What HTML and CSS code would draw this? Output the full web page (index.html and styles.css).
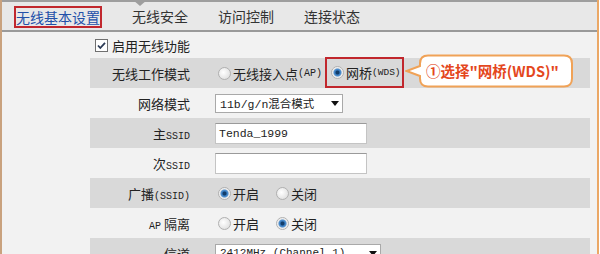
FILE: index.html
```html
<!doctype html>
<html>

<head>
  <meta charset="utf-8">
  <title>无线基本设置</title>
  <link rel="stylesheet" href="styles.css">
</head>

<body>
  <div class="frame">
    <div class="tabs">
      <span class="tab tab-active">无线基本设置</span>
      <span class="tab">无线安全</span>
      <span class="tab">访问控制</span>
      <span class="tab">连接状态</span>
    </div>

    <div class="content">
      <div class="row row-check">
        <svg class="check" width="13" height="13" viewBox="0 0 13 13">
          <rect x="0.5" y="0.5" width="12" height="12" fill="#fff" stroke="#707070" />
          <path d="M3 6.5 L5.3 9 L10 3.8" fill="none" stroke="#2b3a55" stroke-width="1.8" />
        </svg>
        <span>启用无线功能</span>
      </div>

      <div class="row row-gray">
        <div class="label">无线工作模式</div>
        <div class="value opts-mode">
          <span class="opt"><span class="radio"></span>无线接入点<span class="en">(AP)</span></span>
          <span class="opt pick"><span class="radio on"></span>网桥<span class="en">(WDS)</span></span>
        </div>
      </div>

      <div class="row">
        <div class="label">网络模式</div>
        <div class="value">
          <div class="select">
            <span>11b/g/n混合模式</span>
            <svg width="8" height="5" viewBox="0 0 8 5"><polygon points="0 0 8 0 4 5" fill="#111" /></svg>
          </div>
        </div>
      </div>

      <div class="row row-gray">
        <div class="label">主<span class="en">SSID</span></div>
        <div class="value"><div class="input">Tenda_1999</div></div>
      </div>

      <div class="row">
        <div class="label">次<span class="en">SSID</span></div>
        <div class="value"><div class="input"></div></div>
      </div>

      <div class="row row-gray">
        <div class="label">广播<span class="en">(SSID)</span></div>
        <div class="value opts">
          <span class="opt"><span class="radio on"></span>开启</span>
          <span class="opt"><span class="radio"></span>关闭</span>
        </div>
      </div>

      <div class="row">
        <div class="label"><span class="en">AP</span> 隔离</div>
        <div class="value opts">
          <span class="opt"><span class="radio"></span>开启</span>
          <span class="opt"><span class="radio on"></span>关闭</span>
        </div>
      </div>

      <div class="row row-gray">
        <div class="label">信道</div>
        <div class="value">
          <div class="select select-wide">
            <span>2412MHz (Channel 1)</span>
            <svg width="8" height="5" viewBox="0 0 8 5"><polygon points="0 0 8 0 4 5" fill="#111" /></svg>
          </div>
        </div>
      </div>
    </div>

    <div class="callout">
      <svg class="callout__bubble" width="170" height="34" viewBox="0 0 170 34">
        <path d="M23 1.5 H159 Q167 1.5 167 9.5 V24.5 Q167 32.5 159 32.5 H23 Q15 32.5 15 24.5 V22 L1.5 17 L15 12 V9.5 Q15 1.5 23 1.5 Z"
          fill="#fff" stroke="#f0a257" stroke-width="2" />
      </svg>
      <span class="callout__text">①选择"网桥(WDS)"</span>
    </div>
  </div>
</body>

</html>
```

FILE: styles.css
```css
* {
  box-sizing: border-box;
}

body {
  margin: 0;
  background: #fff;
  font-family: "Noto Sans CJK SC", sans-serif;
}

.frame {
  position: relative;
  width: 599px;
  height: 254px;
  overflow: hidden;
  background: #f2f2f2;
  border-left: 2px solid #c9a27e;
  border-right: 2px solid #eba866;
}

/* tab bar */
.tabs {
  position: relative;
  display: flex;
  align-items: center;
  gap: 30px;
  height: 32px;
  padding-left: 12px;
  background: #e8e8e8;
  border-top: 2px solid #9e9e9e;
  border-bottom: 2px solid #9a9a9a;
  font-size: 14px;
  color: #333;
}

.tabs:before {
  content: "";
  position: absolute;
  left: 131px;
  top: -2px;
  border-left: 7px solid transparent;
  border-right: 7px solid transparent;
  border-top: 6px solid #9e9e9e;
}

.tab {
  line-height: 18px;
}

.tab-active {
  margin-top: 2px;
  border: 2px solid #c1272d;
  color: #2350a8;
}

/* form rows */
.content {
  padding: 0 7px 0 88px;
}

.row {
  display: flex;
  align-items: center;
  height: 30px;
  font-size: 13px;
  color: #222;
}

.row-check {
  height: 26px;
  padding-left: 5px;
  gap: 4px;
}

.row-gray {
  background: #d9d9d9;
}

.label {
  width: 100px;
  text-align: right;
}

.value {
  display: flex;
  align-items: center;
  height: 100%;
  padding-left: 25px;
}

.en {
  font-family: "Liberation Mono", monospace;
  font-size: 10px;
}

.opt {
  display: flex;
  align-items: center;
}

.opts .opt {
  margin-right: 14px;
}

.opts-mode .opt {
  margin-right: 3px;
}

.pick {
  height: 31px;
  margin-top: -1px;
  padding: 0 1px 0 1px;
  border: 2px solid #c1272d;
}

.pick .en {
  font-size: 9.5px;
}

.radio {
  width: 13px;
  height: 13px;
  margin: 0 2px 0 3px;
  border-radius: 50%;
  border: 1px solid #b0b0b0;
  background: radial-gradient(circle at 40% 40%, #fff, #d8d8d8);
}

.radio.on {
  background: radial-gradient(circle, #123d6a 0 1.5px, #3b7fc4 2.5px, #4f90cf 3.5px, #e6e6e6 4.5px, #fff 6px);
}

.select {
  display: flex;
  align-items: center;
  justify-content: space-between;
  width: 128px;
  height: 19px;
  padding: 0 3px 0 4px;
  background: #fff;
  border: 1px solid #a9a9a9;
  font-family: "Liberation Mono", "Noto Sans CJK SC", monospace;
  font-size: 11.5px;
}

.select-wide {
  width: 166px;
  font-size: 11px;
}

.input {
  width: 152px;
  height: 21px;
  padding-left: 3px;
  background: #fff;
  border: 1px solid #c4c4c4;
  border-top-color: #9a9a9a;
  font-family: "Liberation Mono", monospace;
  font-size: 11.5px;
  line-height: 19px;
}

/* annotation bubble */
.callout {
  position: absolute;
  left: 403px;
  top: 54px;
  width: 170px;
  height: 34px;
}

.callout__bubble {
  position: absolute;
  left: 0;
  top: 0;
}

.callout__text {
  position: relative;
  display: block;
  padding-left: 21px;
  line-height: 33px;
  font-size: 14.5px;
  font-weight: bold;
  color: #e4471d;
  white-space: nowrap;
}
```
